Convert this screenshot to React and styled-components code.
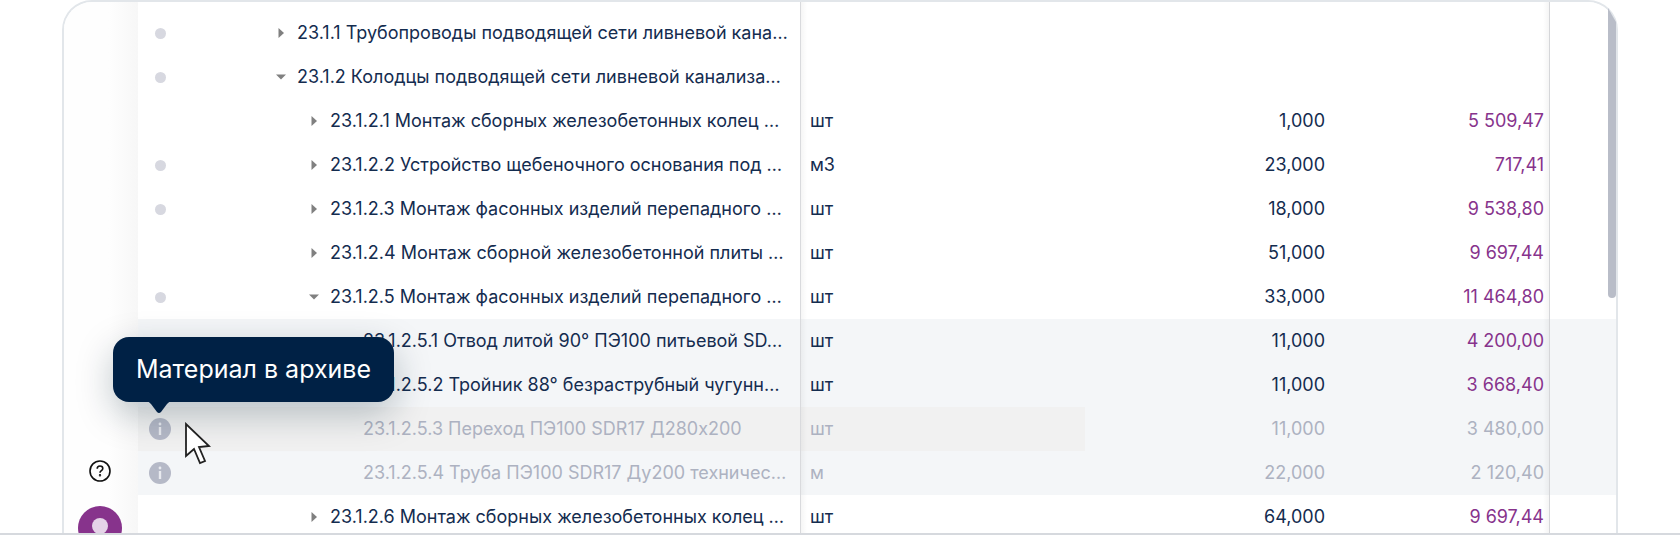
import styled, { createGlobalStyle } from "styled-components";

const GlobalStyle = createGlobalStyle`
  * {
    box-sizing: border-box;
  }
  body {
    margin: 0;
    background-color: #fff;
    color: #142c4f;
    font-family: Inter, "Liberation Sans", sans-serif;
    font-size: 18px;
    line-height: 24px;
  }
  #root {
    height: 100vh;
  }
`;

const Page = styled.div`
  height: 100vh;
  padding: 0 62px;
  overflow: hidden;
  border-bottom: 2px solid #d6d9de;
`;

const Window = styled.div`
  display: flex;
  height: 100%;
  border: 2px solid #e2e6ea;
  border-bottom: none;
  border-radius: 30px 30px 0 0;
  overflow: hidden;
`;

const Sidebar = styled.aside`
  flex: 0 0 74px;
  display: flex;
  flex-direction: column;
  align-items: center;
  justify-content: flex-end;
  gap: 24px;
  padding-right: 2px;
  background: linear-gradient(to right, #fefefe 60%, #f7f7f7);
`;

const HelpButton = styled.button`
  display: flex;
  padding: 0;
  border: none;
  background: none;
  cursor: pointer;
`;

const Profile = styled.a`
  display: block;
  height: 27px;
  overflow: hidden;
`;

const Main = styled.main`
  flex: 1;
  min-width: 0;
  display: flex;
`;

const Table = styled.table`
  flex: 1;
  width: 100%;
  table-layout: fixed;
  border-collapse: separate;
  border-spacing: 0;
  align-self: flex-start;
`;

const Col = styled.col`
  width: ${(props) => props.$width};
`;

const Row = styled.tr`
  height: 44px;
  color: ${(props) => (props.$archived ? "#adb2c1" : "#142c4f")};
  background-color: ${(props) => (props.$shaded ? "#f4f6f8" : "#fff")};
`;

const Cell = styled.td`
  padding: 0;
  background-color: ${(props) => props.$hovered && "#f1f1f1"};
`;

const StatusCell = styled(Cell)`
  padding-left: 11px;
`;

const Status = styled.div`
  position: relative;
  display: flex;
  justify-content: center;
  width: 22px;
`;

const Dot = styled.span`
  width: 11px;
  height: 11px;
  border-radius: 50%;
  background-color: #d7d8e0;
`;

const Name = styled.div`
  display: flex;
  align-items: center;
  padding-left: ${(props) => 87 + props.$level * 33}px;
  padding-right: 12px;
`;

const Toggle = styled.button`
  flex: 0 0 20px;
  display: flex;
  height: 20px;
  margin-right: 6px;
  padding: 5px;
  border: none;
  background: none;
  cursor: pointer;
`;

const ToggleSpace = styled.span`
  flex: 0 0 26px;
`;

const NameText = styled.span`
  overflow: hidden;
  white-space: nowrap;
  text-overflow: ellipsis;
`;

const UnitCell = styled(Cell)`
  padding-left: 9px;
  border-left: 1px solid #d9dadd;
  background-image: linear-gradient(to right, rgba(0, 0, 0, 0.04), transparent 6px);
`;

const NumberCell = styled(Cell)`
  text-align: right;
`;

const PriceCell = styled(NumberCell)`
  padding-right: 5px;
  border-right: 1px solid #d5d6d9;
  color: ${(props) => !props.$archived && "#87338c"};
  background-image: linear-gradient(to left, rgba(0, 0, 0, 0.04), transparent 6px);
`;

const TopRow = styled(Row)`
  height: 9px;
`;

const Scrollbar = styled.div`
  position: absolute;
  top: 2px;
  right: 64px;
  width: 8px;
  height: 296px;
  border-radius: 0 0 4px 4px;
  background-color: #b9bdc8;
  clip-path: polygon(0 6px, 100% 20px, 100% 100%, 0 100%);
`;

const Tooltip = styled.div`
  position: absolute;
  z-index: 1;
  bottom: 38px;
  left: -36px;
  padding: 16px 23px;
  border-radius: 16px;
  background-color: #002145;
  box-shadow: 0 12px 36px rgba(0, 33, 50, 0.26);
  color: #fff;
  font-size: 25px;
  line-height: 33px;
  white-space: nowrap;
`;

const TooltipArrow = styled.svg`
  position: absolute;
  top: 100%;
  left: 32px;
  margin-top: -1px;
`;

const Pointer = styled.svg`
  position: absolute;
  z-index: 1;
  top: 4px;
  left: 35px;
`;

const InfoButton = styled.button`
  display: flex;
  padding: 0;
  border: none;
  background: none;
`;

const rows = [
  { level: 0, dot: true, toggle: "closed", name: "23.1.1 Трубопроводы подводящей сети ливневой кана…" },
  { level: 0, dot: true, toggle: "open", name: "23.1.2 Колодцы подводящей сети ливневой канализа…" },
  { level: 1, toggle: "closed", name: "23.1.2.1 Монтаж сборных железобетонных колец …", unit: "шт", count: "1,000", price: "5 509,47" },
  { level: 1, dot: true, toggle: "closed", name: "23.1.2.2 Устройство щебеночного основания под …", unit: "м3", count: "23,000", price: "717,41" },
  { level: 1, dot: true, toggle: "closed", name: "23.1.2.3 Монтаж фасонных изделий перепадного …", unit: "шт", count: "18,000", price: "9 538,80" },
  { level: 1, toggle: "closed", name: "23.1.2.4 Монтаж сборной железобетонной плиты …", unit: "шт", count: "51,000", price: "9 697,44" },
  { level: 1, dot: true, toggle: "open", name: "23.1.2.5 Монтаж фасонных изделий перепадного …", unit: "шт", count: "33,000", price: "11 464,80" },
  { level: 2, shaded: true, name: "23.1.2.5.1 Отвод литой 90° ПЭ100 питьевой SD…", unit: "шт", count: "11,000", price: "4 200,00" },
  { level: 2, shaded: true, name: "23.1.2.5.2 Тройник 88° безраструбный чугунн…", unit: "шт", count: "11,000", price: "3 668,40" },
  { level: 2, shaded: true, archived: true, hovered: true, name: "23.1.2.5.3 Переход ПЭ100 SDR17 Д280х200", unit: "шт", count: "11,000", price: "3 480,00" },
  { level: 2, shaded: true, archived: true, name: "23.1.2.5.4 Труба ПЭ100 SDR17 Ду200 техничес…", unit: "м", count: "22,000", price: "2 120,40" },
  { level: 1, toggle: "closed", name: "23.1.2.6 Монтаж сборных железобетонных колец …", unit: "шт", count: "64,000", price: "9 697,44" },
];

const InfoIcon = () => (
  <svg width="22" height="22" viewBox="0 0 22 22">
    <circle cx="11" cy="11" r="11" fill="#b5b9c7" />
    <circle cx="11" cy="6" r="1.4" fill="#e8eaef" />
    <path d="M11 9v8" stroke="#e8eaef" strokeWidth="2.4" />
  </svg>
);

const ToggleIcon = ({ open }) => (
  <svg width="10" height="10" viewBox="0 0 10 10">
    <path d={open ? "M0 2.5h10L5 7.5z" : "M2.5 0v10L8 5z"} fill="#808080" />
  </svg>
);

const ItemRow = ({ item }) => (
  <Row $archived={item.archived} $shaded={item.shaded}>
    <StatusCell $hovered={item.hovered}>
      <Status>
        {item.dot && <Dot />}
        {item.archived && (
          <InfoButton aria-label="Материал в архиве">
            <InfoIcon />
          </InfoButton>
        )}
        {item.hovered && (
          <>
            <Tooltip role="tooltip">
              Материал в архиве
              <TooltipArrow width="28" height="13" viewBox="0 0 28 13">
                <path d="M0 0h28c-3 0-4 1-6 3l-6 8q-2 2-4 0L6 3C4 1 3 0 0 0z" fill="#002145" />
              </TooltipArrow>
            </Tooltip>
            <Pointer width="28" height="44" viewBox="0 0 28 44">
              <path
                d="M2 2v32l8-7 6 14 5-2-6-14 10-1z"
                fill="#fff"
                stroke="#222"
                strokeWidth="1.8"
              />
            </Pointer>
          </>
        )}
      </Status>
    </StatusCell>
    <Cell $hovered={item.hovered}>
      <Name $level={item.level}>
        {item.toggle ? (
          <Toggle aria-label={item.name}>
            <ToggleIcon open={item.toggle === "open"} />
          </Toggle>
        ) : (
          <ToggleSpace />
        )}
        <NameText>{item.name}</NameText>
      </Name>
    </Cell>
    <UnitCell $hovered={item.hovered}>{item.unit}</UnitCell>
    <NumberCell>{item.count}</NumberCell>
    <PriceCell $archived={item.archived}>{item.price}</PriceCell>
    <Cell />
  </Row>
);

const App = () => {
  return (
    <>
      <GlobalStyle />
      <Page>
        <Window>
          <Sidebar>
            <HelpButton aria-label="Помощь">
              <svg width="22" height="22" viewBox="0 0 22 22" fill="none" stroke="#111" strokeWidth="1.6">
                <circle cx="11" cy="11" r="10" />
                <path d="M8.2 8.7c0-1.7 1.2-2.7 2.8-2.7s2.8 1 2.8 2.5c0 2.2-2.8 2-2.8 4.2" />
                <circle cx="11" cy="15.3" r="0.4" />
              </svg>
            </HelpButton>
            <Profile href="#" aria-label="Профиль">
              <svg width="44" height="44" viewBox="0 0 44 44">
                <circle cx="22" cy="22" r="22" fill="#87338c" />
                <circle cx="22" cy="20" r="8" fill="#e5d3e8" />
              </svg>
            </Profile>
          </Sidebar>
          <Main>
            <Table>
              <colgroup>
                <Col $width="46px" />
                <Col $width="616px" />
                <Col $width="285px" />
                <Col />
                <Col $width="225px" />
                <Col $width="66px" />
              </colgroup>
              <tbody>
                <TopRow>
                  <Cell />
                  <Cell />
                  <UnitCell />
                  <NumberCell />
                  <PriceCell />
                  <Cell />
                </TopRow>
                {rows.map((item) => (
                  <ItemRow key={item.name} item={item} />
                ))}
              </tbody>
            </Table>
          </Main>
        </Window>
        <Scrollbar />
      </Page>
    </>
  );
};

export default App;
